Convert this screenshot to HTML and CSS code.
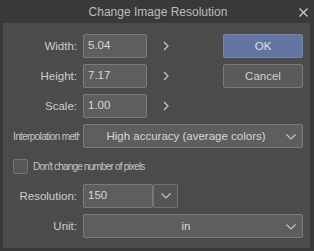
FILE: index.html
```html
<!DOCTYPE html>
<html>
<head>
<meta charset="utf-8">
<link rel="stylesheet" href="styles.css">
</head>
<body>
<div class="titlebar">
  <span class="title">Change Image Resolution</span>
  <svg class="close" width="9" height="9" viewBox="0 0 9 9"><path d="M0.5 0.5L8.5 8.5M8.5 0.5L0.5 8.5" stroke="#cfcfcf" stroke-width="1.2" fill="none"/></svg>
</div>
<div class="panel">
  <div class="top">
    <div class="fields">
      <div class="row">
        <label class="lbl">Width:</label>
        <div class="input">5.04</div>
        <svg class="arrow" width="6" height="10" viewBox="0 0 6 10"><path d="M1 1L5 5L1 9" stroke="#c8c8c8" stroke-width="1.2" fill="none"/></svg>
      </div>
      <div class="row">
        <label class="lbl">Height:</label>
        <div class="input">7.17</div>
        <svg class="arrow" width="6" height="10" viewBox="0 0 6 10"><path d="M1 1L5 5L1 9" stroke="#c8c8c8" stroke-width="1.2" fill="none"/></svg>
      </div>
      <div class="row">
        <label class="lbl">Scale:</label>
        <div class="input">1.00</div>
        <svg class="arrow" width="6" height="10" viewBox="0 0 6 10"><path d="M1 1L5 5L1 9" stroke="#c8c8c8" stroke-width="1.2" fill="none"/></svg>
      </div>
    </div>
    <div class="buttons">
      <div class="btn ok">OK</div>
      <div class="btn cancel">Cancel</div>
    </div>
  </div>
  <div class="row sel-row">
    <div class="small-lbl">Interpolation method:</div>
    <div class="select">
      <span class="sel-text">High accuracy (average colors)</span>
      <svg class="chev" width="10" height="6" viewBox="0 0 10 6"><path d="M0.5 0.5L5 5L9.5 0.5" stroke="#c8c8c8" stroke-width="1.1" fill="none"/></svg>
    </div>
  </div>
  <div class="check-row">
    <div class="checkbox"></div>
    <span class="small-text">Don't change number of pixels</span>
  </div>
  <div class="row res-row">
    <label class="lbl">Resolution:</label>
    <div class="input res">150</div>
    <div class="dd">
      <svg width="10" height="6" viewBox="0 0 10 6"><path d="M0.5 0.5L5 5L9.5 0.5" stroke="#c8c8c8" stroke-width="1.1" fill="none"/></svg>
    </div>
  </div>
  <div class="row unit-row">
    <label class="lbl">Unit:</label>
    <div class="select">
      <span class="sel-text">in</span>
      <svg class="chev" width="10" height="6" viewBox="0 0 10 6"><path d="M0.5 0.5L5 5L9.5 0.5" stroke="#c8c8c8" stroke-width="1.1" fill="none"/></svg>
    </div>
  </div>
</div>
</body>
</html>
```

FILE: styles.css
```css
html, body {
  margin: 0;
  padding: 0;
}
body {
  width: 314px;
  height: 251px;
  background: #393939;
  font-family: "Liberation Sans", Arial, sans-serif;
  color: #d0d0d0;
  overflow: hidden;
}
.titlebar {
  height: 23px;
  display: flex;
  align-items: center;
  justify-content: center;
  position: relative;
}
.title {
  font-size: 12px;
  color: #bdbdbd;
  margin-left: 2px;
  margin-top: 1px;
}
.close {
  position: absolute;
  right: 6px;
  top: 8px;
}
.panel {
  margin: 0 4px 0 3px;
  height: 225px;
  background: #4b4b4b;
  padding-top: 11px;
  box-sizing: border-box;
}
.top {
  display: flex;
}
.fields {
  display: flex;
  flex-direction: column;
  gap: 6px;
}
.row {
  display: flex;
  align-items: center;
  height: 24px;
}
.lbl {
  width: 74px;
  text-align: right;
  font-size: 11.5px;
  color: #cdcdcd;
  margin-right: 6px;
  flex: none;
}
.input {
  width: 64px;
  height: 24px;
  box-sizing: border-box;
  background: #5e5e5e;
  border: 1px solid #7b7b7b;
  border-radius: 2px;
  font-size: 11.5px;
  color: #d6d6d6;
  padding-left: 4px;
  line-height: 21px;
}
.arrow {
  margin-left: 16px;
}
.buttons {
  margin-left: 54px;
  display: flex;
  flex-direction: column;
  gap: 6px;
}
.btn {
  width: 80px;
  height: 24px;
  box-sizing: border-box;
  border-radius: 2px;
  text-align: center;
  font-size: 11.5px;
  line-height: 22px;
}
.ok {
  background: #6575a1;
  border: 1px solid #7685b0;
  color: #dfe2ea;
}
.cancel {
  background: #5a5a5a;
  border: 1px solid #7a7a7a;
  color: #d0d0d0;
}
.sel-row {
  margin-top: 6px;
}
.small-lbl {
  width: 67px;
  margin-left: 10px;
  margin-right: 3px;
  overflow: hidden;
  white-space: nowrap;
  font-size: 10px;
  letter-spacing: -0.65px;
  color: #c6c6c6;
  flex: none;
}
.select {
  width: 220px;
  height: 24px;
  box-sizing: border-box;
  background: #5e5e5e;
  border: 1px solid #7b7b7b;
  border-radius: 2px;
  display: flex;
  align-items: center;
  position: relative;
}
.sel-text {
  flex: 1;
  text-align: center;
  font-size: 11.5px;
  color: #d6d6d6;
  padding-right: 14px;
}
.chev {
  position: absolute;
  right: 6px;
  top: 9px;
}
.check-row {
  display: flex;
  align-items: center;
  margin-top: 11px;
  height: 15px;
  padding-left: 10px;
}
.checkbox {
  width: 15px;
  height: 15px;
  box-sizing: border-box;
  background: #575757;
  border: 1px solid #767676;
  border-radius: 2px;
}
.small-text {
  font-size: 10px;
  letter-spacing: -0.8px;
  color: #c6c6c6;
  margin-left: 5px;
}
.res-row {
  margin-top: 10px;
}
.input.res {
  width: 70px;
}
.dd {
  width: 25px;
  height: 24px;
  box-sizing: border-box;
  background: #555555;
  border: 1px solid #737373;
  border-radius: 2px;
  display: flex;
  align-items: center;
  justify-content: center;
}
.unit-row {
  margin-top: 6px;
}
```
